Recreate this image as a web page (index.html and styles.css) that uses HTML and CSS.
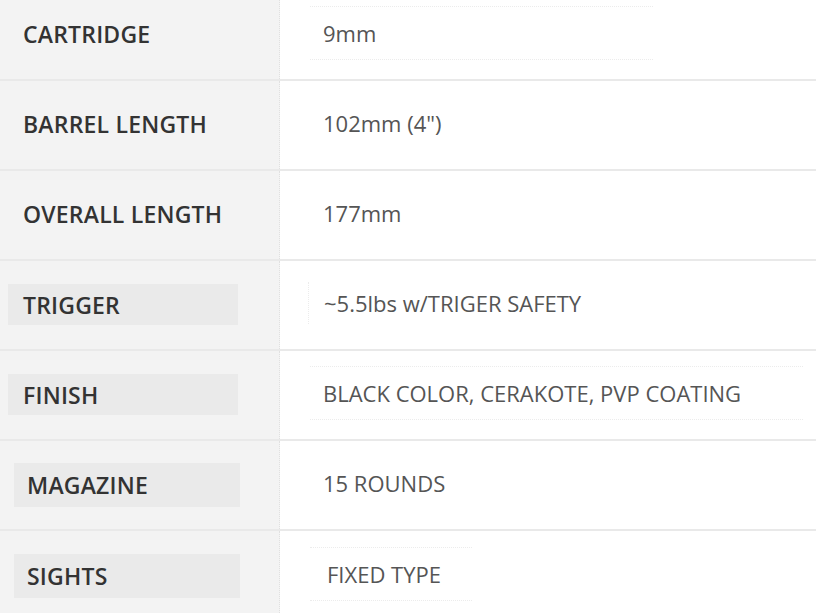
FILE: index.html
```html
<!DOCTYPE html>
<html>
<head>
<meta charset="utf-8">
<link rel="stylesheet" href="styles.css">
</head>
<body>
<div class="specs">
  <div class="row">
    <div class="label"><span class="label-text">CARTRIDGE</span></div>
    <div class="value"><span class="value-text boxed w1">9mm</span></div>
  </div>
  <div class="row">
    <div class="label"><span class="label-text">BARREL LENGTH</span></div>
    <div class="value"><span class="value-text">102mm (4")</span></div>
  </div>
  <div class="row">
    <div class="label"><span class="label-text">OVERALL LENGTH</span></div>
    <div class="value"><span class="value-text">177mm</span></div>
  </div>
  <div class="row">
    <div class="label"><span class="label-text hl hl-a">TRIGGER</span></div>
    <div class="value"><span class="value-text side">~5.5lbs w/TRIGER SAFETY</span></div>
  </div>
  <div class="row">
    <div class="label"><span class="label-text hl hl-a">FINISH</span></div>
    <div class="value"><span class="value-text boxed w2">BLACK COLOR, CERAKOTE, PVP COATING</span></div>
  </div>
  <div class="row">
    <div class="label"><span class="label-text hl hl-b">MAGAZINE</span></div>
    <div class="value"><span class="value-text">15 ROUNDS</span></div>
  </div>
  <div class="row">
    <div class="label"><span class="label-text hl hl-b">SIGHTS</span></div>
    <div class="value"><span class="value-text boxed w3 shift">FIXED TYPE</span></div>
  </div>
</div>
</body>
</html>
```
FILE: styles.css
```css
html, body {
  margin: 0;
  padding: 0;
  background: #ffffff;
  overflow: hidden;
}
.specs {
  margin-top: -9px;
  width: 816px;
}
.row {
  display: grid;
  grid-template-columns: 280px 1fr;
  height: 90px;
  border-bottom: 2px solid #e9e9e9;
  box-sizing: border-box;
}
.row:last-child {
  border-bottom: none;
}
.label {
  background: #f3f3f3;
  border-right: 1px dotted #e0e0e0;
  display: flex;
  align-items: center;
  padding-left: 8px;
}
.label-text {
  font-family: "Open Sans", sans-serif;
  font-weight: 600;
  font-size: 23px;
  letter-spacing: 0.2px;
  color: #333333;
  padding-left: 15px;
  margin-top: -3px;
}
.hl {
  background: #eaeaea;
  width: 230px;
  height: 41px;
  display: flex;
  align-items: center;
  box-sizing: border-box;
  margin-top: -1px;
}
.hl-b {
  margin-left: 6px;
  width: 226px;
  height: 44px;
  padding-left: 13px;
}
.value {
  display: flex;
  align-items: center;
  padding-left: 43px;
}
.value-text {
  font-family: "Open Sans", sans-serif;
  font-weight: 400;
  font-size: 22px;
  color: #555555;
  margin-top: -4px;
}
.boxed {
  border-top: 1px dotted #ececec;
  border-bottom: 1px dotted #ececec;
  padding: 11px 0;
}
.w1 { width: 330px; margin-left: -13px; padding-left: 13px; }
.w2 { width: 480px; margin-left: -13px; padding-left: 13px; }
.w3 { width: 145px; margin-left: -13px; padding-left: 17px; }
.side {
  border-left: 1px dotted #ececec;
  margin-left: -15px;
  padding: 6px 0 6px 15px;
}
```
